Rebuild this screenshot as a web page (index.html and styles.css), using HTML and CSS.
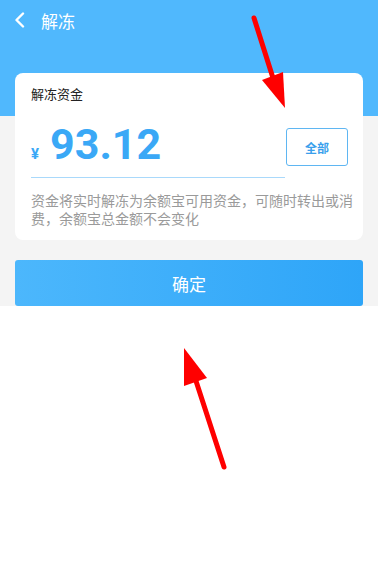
FILE: index.html
```html
<!DOCTYPE html>
<html lang="zh-CN">
<head>
    <meta charset="UTF-8">
    <meta name="viewport" content="width=device-width, initial-scale=1.0">
    <title>解冻</title>
    <link rel="stylesheet" href="styles.css">
</head>
<body>
    <header class="topbar">
        <div class="nav">
            <svg class="back" width="12" height="16" viewBox="0 0 12 16">
                <path d="M9 1.5 L2.5 8 L9 14.5" fill="none" stroke="#fff" stroke-width="2.4" stroke-linecap="round" stroke-linejoin="round"/>
            </svg>
            <span class="title">解冻</span>
        </div>
    </header>

    <main class="content">
        <section class="card">
            <div class="label">解冻资金</div>
            <div class="amount-row">
                <div class="amount">
                    <span class="currency">¥</span>
                    <span class="value">93.12</span>
                </div>
                <button class="all-btn" type="button">全部</button>
            </div>
            <p class="note">资金将实时解冻为余额宝可用资金，可随时转出或消费，余额宝总金额不会变化</p>
        </section>
        <button class="confirm" type="button">确定</button>
    </main>

    <!-- annotation arrows drawn over the screenshot -->
    <svg class="overlay" width="378" height="569" viewBox="0 0 378 569">
        <line x1="254" y1="18" x2="273" y2="78" stroke="#ff0000" stroke-width="5" stroke-linecap="round"/>
        <polygon points="262,80 283,72 285,108" fill="#ff0000"/>
        <line x1="224" y1="467" x2="196" y2="381" stroke="#ff0000" stroke-width="5" stroke-linecap="round"/>
        <polygon points="184,386 207,378 184,348" fill="#ff0000"/>
    </svg>
</body>
</html>
```

FILE: styles.css
```css
body {
    margin: 0;
    background-color: #fff;
    font-family: "Noto Sans CJK SC", "Noto Sans", sans-serif;
    position: relative;
    min-height: 569px;
}
.topbar {
    height: 73px;
    background-color: #50b8fd;
}
.nav {
    height: 40px;
    display: flex;
    align-items: center;
    padding-left: 14px;
}
.back {
    display: block;
    margin-right: 15px;
}
.title {
    color: #fff;
    font-size: 17px;
}
.content {
    background: linear-gradient(to bottom, #50b8fd 0, #50b8fd 43px, #f4f4f4 43px);
    padding: 0 15px;
}
.card {
    background-color: #fff;
    border-radius: 8px;
    padding: 12px 6px 13px 16px;
}
.label {
    font-size: 13px;
    line-height: 18px;
    color: #222;
}
.amount-row {
    display: flex;
    align-items: flex-start;
    margin-top: 16px;
}
.amount {
    width: 254px;
    display: flex;
    align-items: baseline;
    padding-bottom: 8px;
    border-bottom: 1px solid #a9d9fb;
}
.currency {
    font-family: Roboto, sans-serif;
    font-weight: bold;
    font-size: 15px;
    color: #3aa8f6;
    margin-right: 11px;
}
.value {
    font-family: Roboto, sans-serif;
    font-weight: bold;
    font-size: 43px;
    line-height: 50px;
    color: #3aa8f6;
}
.all-btn {
    margin: 9px 0 0 1px;
    width: 62px;
    height: 38px;
    padding: 0;
    border: 1px solid #5fb6f2;
    border-radius: 3px;
    background-color: #fff;
    color: #3a9fec;
    font-family: "Noto Sans CJK SC", sans-serif;
    font-size: 12px;
    font-weight: bold;
}
.note {
    margin: 13px 0 0;
    font-size: 14px;
    line-height: 18px;
    color: #9a9a9a;
}
.confirm {
    display: block;
    width: 100%;
    height: 46px;
    margin-top: 20px;
    border: none;
    border-radius: 3px;
    background: linear-gradient(to right, #4cb7fc, #2ea5f8);
    color: #fff;
    font-family: "Noto Sans CJK SC", sans-serif;
    font-size: 17px;
}
.overlay {
    position: absolute;
    top: 0;
    left: 0;
    pointer-events: none;
}
```
